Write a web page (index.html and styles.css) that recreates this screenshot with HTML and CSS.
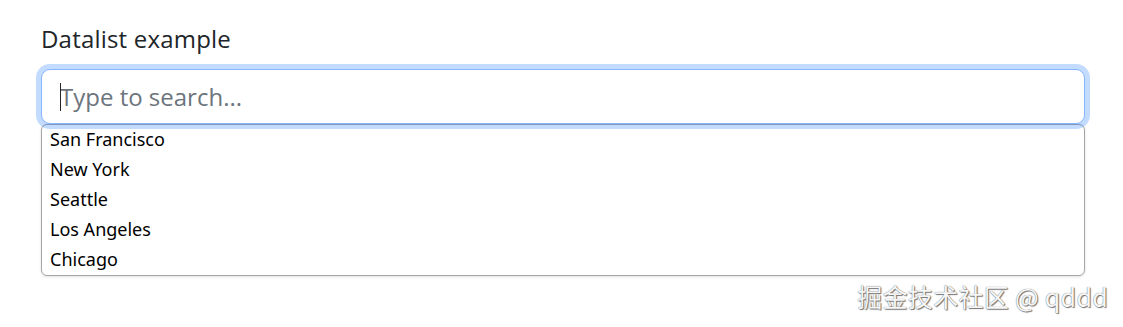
FILE: index.html
```html
<!DOCTYPE html>
<html lang="en">
<head>
<meta charset="utf-8">
<link rel="stylesheet" href="styles.css">
</head>
<body>
<div class="page">
  <label class="form-label" for="dl">Datalist example</label>
  <div class="field">
    <input class="form-control" id="dl" placeholder="Type to search...">
    <span class="caret"></span>
  </div>
  <div class="options">
    <div class="option">San Francisco</div>
    <div class="option">New York</div>
    <div class="option">Seattle</div>
    <div class="option">Los Angeles</div>
    <div class="option">Chicago</div>
  </div>
</div>
<div class="watermark">掘金技术社区 @ qddd</div>
</body>
</html>
```
FILE: styles.css
```css
html, body {
  margin: 0;
  padding: 0;
  background: #fff;
  width: 1123px;
  height: 327px;
  overflow: hidden;
}
body {
  position: relative;
  font-family: "Open Sans", "Noto Sans", sans-serif;
  color: #212529;
}
.page {
  padding: 21px 38px 0 41px;
  width: 1044px;
}
.form-label {
  display: block;
  font-size: 24px;
  letter-spacing: 0.2px;
  line-height: 36px;
  margin-bottom: 12px;
  color: #212529;
}
.field {
  position: relative;
}
.form-control {
  box-sizing: border-box;
  display: block;
  width: 1044px;
  height: 55px;
  padding: 0 18px;
  font-family: "Open Sans", "Noto Sans", sans-serif;
  font-size: 24px;
  color: #212529;
  background: #fff;
  border: 1.5px solid #86b7fe;
  border-radius: 9px;
  box-shadow: 0 0 0 5px rgba(13, 110, 253, 0.25);
  outline: none;
}
.form-control::placeholder {
  color: #6c757d;
}
.caret {
  position: absolute;
  left: 19px;
  top: 14px;
  width: 1px;
  height: 28px;
  background: #212529;
}
.options {
  box-sizing: border-box;
  width: 1044px;
  margin-top: 0;
  background: #fff;
  border: 1px solid #a6a6a6;
  border-radius: 6px;
  box-shadow: 0 1px 3px rgba(0, 0, 0, 0.12);
  display: flex;
  flex-direction: column;
  padding: 0;
  font-family: "Noto Sans", "Noto Sans CJK SC", sans-serif;
  font-size: 18px;
  color: #000;
}
.option {
  height: 30px;
  line-height: 29px;
  padding-left: 8px;
}
.watermark {
  position: absolute;
  right: 15px;
  bottom: 14px;
  font-family: "Noto Sans CJK SC", "Noto Sans", sans-serif;
  font-size: 25px;
  letter-spacing: 0.3px;
  line-height: 34px;
  color: #f6f6f6;
  text-shadow: 0 0 1px #555, 1px 1px 1px #777;
}
```
